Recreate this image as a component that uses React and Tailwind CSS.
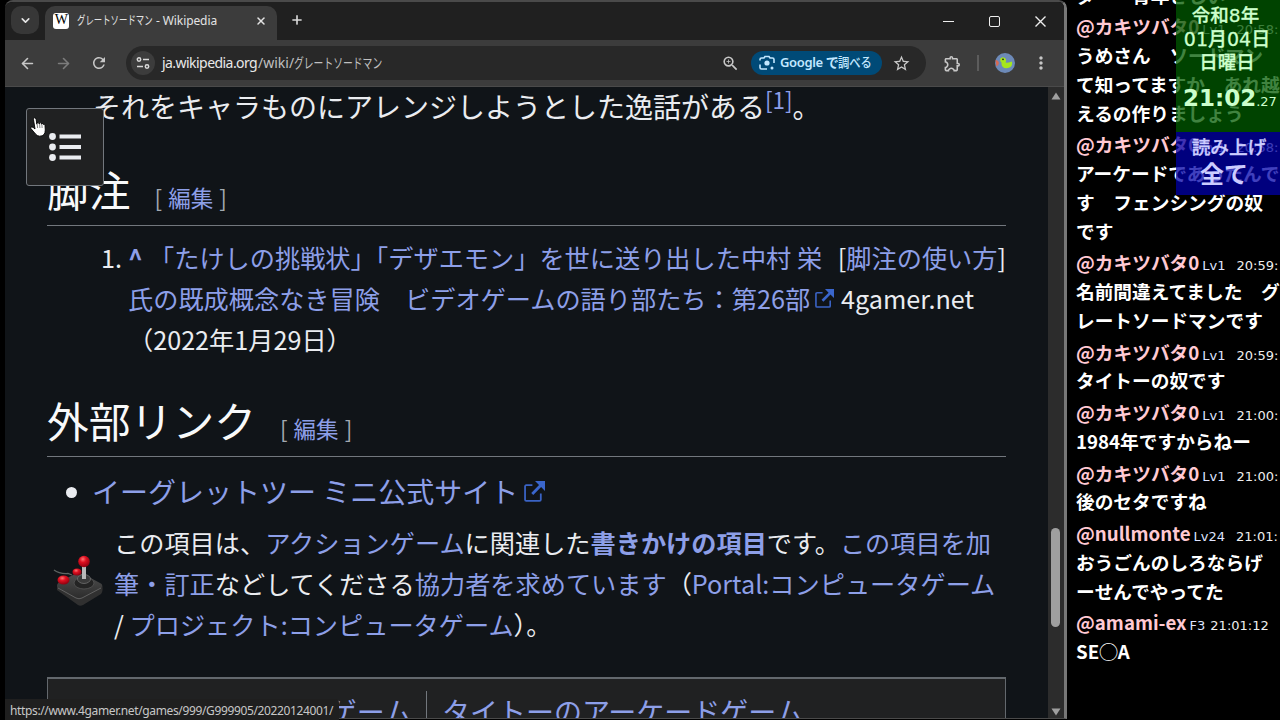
import { ChevronDown, Plus, X, ArrowLeft, ArrowRight } from 'lucide-react';
import { MdRefresh, MdOutlineExtension, MdStarBorder, MdZoomIn, MdMoreVert } from 'react-icons/md';

const messages = [
  { user: '@カキツバタ0', meta: 'Lv1', time: '20:58:', lines: ['うめさん　ソードマン', 'て知ってますか　あれ越', 'えるの作りましょう'] },
  { user: '@カキツバタ0', meta: 'Lv1', time: '20:58:', lines: ['アーケードであったんで', 'す　フェンシングの奴', 'です'] },
  { user: '@カキツバタ0', meta: 'Lv1', time: '20:59:', lines: ['名前間違えてました　グ', 'レートソードマンです'] },
  { user: '@カキツバタ0', meta: 'Lv1', time: '20:59:', lines: ['タイトーの奴です'] },
  { user: '@カキツバタ0', meta: 'Lv1', time: '21:00:', lines: ['1984年ですからねー'] },
  { user: '@カキツバタ0', meta: 'Lv1', time: '21:00:', lines: ['後のセタですね'] },
  { user: '@nullmonte', meta: 'Lv24', time: '21:01:', lines: ['おうごんのしろならげ', 'ーせんでやってた'] },
  { user: '@amami-ex', meta: 'F3', time: '21:01:12', lines: ['SE◯A'], tight: true },
];

function Link({ children, className = '' }) {
  return <a className={`text-[#8d9fe8] ${className}`}>{children}</a>;
}

function ExternalIcon({ className }) {
  return (
    <svg viewBox="0 0 20 20" className={`inline-block shrink-0 ${className}`}>
      <path d="M8 4H2.2Q1 4 1 5.200V17.800Q1 19 2.200 19H14.800Q16 19 16 17.800V12" fill="none" stroke="#3a63c4" strokeWidth="1.7" />
      <path d="M10.500 0H20V9.500L16.300 5.800L8.800 13.300L6.900 11.400L14.300 3.900Z" fill="#3a66cc" />
    </svg>
  );
}

function Joystick() {
  return (
    <svg viewBox="0 0 52 52" className="h-[52px] w-[52px] shrink-0">
      <defs>
        <linearGradient id="base" x1="0" y1="0" x2="0" y2="1">
          <stop offset="0" stopColor="#4e4e4e" />
          <stop offset="1" stopColor="#2c2c2c" />
        </linearGradient>
        <radialGradient id="ball" cx="0.4" cy="0.3" r="0.7">
          <stop offset="0" stopColor="#ff7474" />
          <stop offset="0.4" stopColor="#df1020" />
          <stop offset="1" stopColor="#8e0010" />
        </radialGradient>
      </defs>
      <path d="M1 15Q6 19 15 18.500L19 20" fill="none" stroke="#5d6563" strokeWidth="1.300" />
      <path d="M4 31V35L25 50Q27 51.500 30 50L48 39Q50 37 49.500 31Z" fill="#303030" />
      <path d="M4 31Q4 28 8 26L22 19Q26 18 30 19L47 28Q51 30 48 33L29 43Q26 44.500 23 43L5 33Z" fill="url(#base)" />
      <path d="M5 33L23 43Q26 44.500 29 43L48 33" fill="none" stroke="#666" strokeWidth="0.900" />
      <ellipse cx="31" cy="28" rx="10" ry="6" fill="#242424" stroke="#555" strokeWidth="0.800" />
      <ellipse cx="31" cy="24" rx="6.500" ry="4.500" fill="#3a3a3a" stroke="#777" strokeWidth="0.700" />
      <rect x="29" y="10" width="4" height="14" fill="#b9b9b9" />
      <ellipse cx="24" cy="17" rx="4.500" ry="3.500" fill="url(#ball)" />
      <circle cx="31" cy="6.500" r="5.800" fill="url(#ball)" />
      <ellipse cx="10.500" cy="25" rx="6" ry="4.500" fill="url(#ball)" />
    </svg>
  );
}

function HandCursor() {
  return (
    <svg viewBox="0 0 16 20" className="absolute left-[3px] top-[8px] h-5 w-4">
      <path
        d="M4.200 0.800Q5.800 0.500 6.100 2.300L6.900 7.200V5.600Q8.500 4.800 8.900 6.200L9.300 7V5.800Q10.900 5.200 11.300 6.500L11.600 7.300V6.500Q13 6 13.500 7.500Q14.600 6.900 15 8.500L15.300 13Q15.200 16 14 17.500Q12.500 19.300 9.500 19.200Q7 19 5.500 17L0.900 11.500Q0.400 10 1.800 9.900Q3 10 5 12L3.500 2.600Q3.300 1.200 4.200 0.800Z"
        fill="#fff"
        stroke="#000"
        strokeWidth="0.900"
      />
      <path d="M7.200 7.200L7.600 11M9.600 7L9.900 11M11.900 7.500L12.100 11" stroke="#333" strokeWidth="0.600" fill="none" />
    </svg>
  );
}

function TabStrip() {
  return (
    <div className="flex h-[39px] items-end bg-[#202020] pl-[6px]">
      <button className="mb-[6px] flex h-7 w-7 items-center justify-center rounded-[10px] bg-[#373737] text-[#e3e3e3]">
        <ChevronDown className="h-[13px] w-[13px]" strokeWidth={3} />
      </button>
      <div className="ml-[6px] flex h-[34px] w-[232px] items-center rounded-t-[10px] bg-[#3c3c3c] pb-[5px] pl-2">
        <span className="flex h-4 w-4 shrink-0 items-center justify-center rounded-[3px] bg-white pb-px font-['Liberation_Serif'] text-[14px] leading-none tracking-tighter text-black">
          W
        </span>
        <div className="ml-2 flex text-[12px] whitespace-pre text-[#e3e3e3]">
          <span className="inline-block w-[76px] origin-left">
            <span className="inline-block origin-left scale-x-[0.7]">グレートソードマン</span>
          </span>
          <span className="w-[66px] tracking-[-0.1px]"> - Wikipedia</span>
        </div>
        <X className="ml-[36px] h-3 w-3 text-[#e3e3e3]" strokeWidth={3} />
      </div>
      <Plus className="mb-[13px] ml-[13px] h-[14px] w-[14px] text-[#d8d8d8]" strokeWidth={2.8} />
      <div className="mr-[18px] mb-[13px] ml-auto flex items-center gap-[35px]">
        <span className="h-[1.500px] w-[11px] bg-[#eee]" />
        <span className="h-[11px] w-[11px] rounded-[2px] border-[1.500px] border-[#eee]" />
        <svg viewBox="0 0 11 11" className="h-[11px] w-[11px]">
          <path d="M0.500 0.500L10.500 10.500M10.500 0.500L0.500 10.500" stroke="#eee" strokeWidth="1.400" />
        </svg>
      </div>
    </div>
  );
}

function Toolbar() {
  return (
    <div className="flex h-[47px] items-center border-b border-[#4a4a4a] bg-[#3c3c3c] pl-[14px] text-[#c7c7c7]">
      <ArrowLeft className="h-[17px] w-[17px]" strokeWidth={2.3} />
      <ArrowRight className="ml-[19px] h-[17px] w-[17px] text-[#7c7c7c]" strokeWidth={2.3} />
      <MdRefresh className="ml-[18px] h-[18px] w-[18px]" />
      <div className="ml-[18px] flex h-[34px] w-[800px] shrink-0 items-center rounded-full bg-[#282828] pl-[5px]">
        <span className="flex h-6 w-6 items-center justify-center rounded-full bg-[#3c3c3c]">
          <svg viewBox="0 0 14 12" className="h-3 w-[14px]" fill="none" stroke="#d8d8d8" strokeWidth="1.500">
            <circle cx="3" cy="2.500" r="1.700" />
            <path d="M7 2.500H13M1 9.500H7" />
            <circle cx="11" cy="9.500" r="1.700" />
          </svg>
        </span>
        <div className="ml-[7px] flex pb-[2px] text-[14px] whitespace-pre">
          <span className="w-[96px] tracking-[-0.550px] text-[#e8e8e8]">ja.wikipedia.org</span>
          <span className="w-[36px] text-[#c0c0c0]">/wiki/</span>
          <span className="w-[90px]">
            <span className="inline-block origin-left scale-x-[0.700] text-[#c0c0c0]">グレートソードマン</span>
          </span>
        </div>
        <MdZoomIn className="ml-auto h-[19px] w-[19px]" />
        <div className="ml-[11px] flex h-6 w-[131px] items-center rounded-full bg-[#004a77] pl-[8px] text-[#c2e7ff]">
          <svg viewBox="0 0 16 16" className="h-4 w-4" fill="none" stroke="#c2e7ff" strokeWidth="1.600">
            <path d="M1 5.500V4.500Q1 3 2.500 3H5L6 1.500H10L11 3H13.500Q15 3 15 4.500V8M1 9.500V12.500Q1 14 2.500 14H8" />
            <circle cx="8" cy="8" r="2.600" fill="#c2e7ff" stroke="none" />
            <circle cx="13" cy="13" r="1.500" fill="#c2e7ff" stroke="none" />
          </svg>
          <span className="ml-[5px] text-[13px] font-semibold tracking-[-0.350px] whitespace-nowrap">Google で</span>
          <span className="inline-block origin-left scale-x-[0.870] text-[13px] font-medium whitespace-nowrap">調べる</span>
        </div>
        <MdStarBorder className="mr-[15px] ml-[10px] h-[19px] w-[19px] shrink-0" />
      </div>
      <MdOutlineExtension className="ml-[17px] h-[19px] w-[19px]" />
      <span className="ml-[15px] h-4 w-[2px] bg-[#5c5c5c]" />
      <svg viewBox="0 0 20 20" className="ml-[16px] h-5 w-5">
        <circle cx="10" cy="10" r="10" fill="#6d8ab8" />
        <path d="M5 6Q7 3 10 5Q12 7 10.500 9.500Q14 10 17 8.500Q18 14 13 15Q7 16 6.500 11Q7 9 5.500 8.500Z" fill="#a6e61e" />
        <path d="M0.500 7Q3 7 4 10Q3.500 12 1.500 13.500Z" fill="#d86a54" />
        <circle cx="8" cy="6.300" r="0.900" fill="#222" />
      </svg>
      <MdMoreVert className="ml-[16px] h-5 w-5" />
    </div>
  );
}

function SectionHeading({ title, className = '' }) {
  return (
    <div className={`flex h-[61px] items-baseline border-b border-[#72777d] leading-[48px] whitespace-nowrap ${className}`}>
      <h2 className="text-[41.800px] text-[#f8f9fa]">{title}</h2>
      <span className="ml-[24px] flex text-[22.500px] text-[#a2a9b1]">
        [<Link className="mx-[6px]">編集</Link>]
      </span>
    </div>
  );
}

function Article() {
  return (
    <main className="h-[632px] flex-1 overflow-hidden bg-[#101418] px-[42px] font-['Noto_Sans_CJK_JP',sans-serif] text-[25.200px] leading-[41px] whitespace-nowrap text-[#eaecf0]">
      <p className="-mt-px h-10 pl-[46px] text-[28px]">
        それをキャラものにアレンジしようとした逸話がある
        <Link className="relative -top-[9px] text-[22.400px]">[1]</Link>。
      </p>

      <SectionHeading title="脚注" className="mt-[39px]" />
      <div className="mt-[11px] flex">
        <div className="w-[81px] pl-[54px]">1.</div>
        <div className="flex-1">
          <div className="flex">
            <Link className="w-[21px] font-bold">^</Link>
            <Link>「たけしの挑戦状」「デザエモン」を世に送り出した中村 栄</Link>
            <span className="ml-auto">[<Link>脚注の使い方</Link>]</span>
          </div>
          <div className="flex items-center">
            <Link>氏の既成概念なき冒険　ビデオゲームの語り部たち：第26部</Link>
            <ExternalIcon className="mr-[7px] ml-[5px] h-[19px] w-[19px]" />
            4gamer.net
          </div>
          <div>（2022年1月29日）</div>
        </div>
      </div>

      <SectionHeading title="外部リンク" className="mt-[36px]" />
      <div className="mt-[14px] flex items-center text-[28px]">
        <span className="mt-[2px] ml-[19px] h-[11px] w-[11px] rounded-full bg-[#eaecf0]" />
        <Link className="ml-[15px]">イーグレットツー ミニ公式サイト</Link>
        <ExternalIcon className="ml-[6px] h-[21px] w-[21px]" />
      </div>

      <div className="mt-[10px] flex">
        <div className="w-[67px] pt-[33px] pl-[6px]">
          <Joystick />
        </div>
        <div>
          <div>
            この項目は、<Link>アクションゲーム</Link>に関連した<Link className="font-bold">書きかけの項目</Link>です。<Link>この項目を加</Link>
          </div>
          <div>
            <Link>筆・訂正</Link>などしてくださる<Link>協力者を求めています</Link>（<Link>Portal:コンピュータゲーム</Link>
          </div>
          <div>
            / <Link>プロジェクト:コンピュータゲーム</Link>）。
          </div>
        </div>
      </div>

      <div className="mt-[32px] flex h-[60px] border border-t-2 border-b-0 border-[#63686d] bg-[#202122] pt-[12px] text-[28px]">
        <div className="w-[379px] border-r border-[#72777d] pr-[14px] text-right">
          <Link>ゲーム</Link>
        </div>
        <Link className="ml-[15px]">タイトーのアーケードゲーム</Link>
      </div>
    </main>
  );
}

function Scrollbar() {
  return (
    <div className="flex h-[632px] w-[16px] flex-col items-center bg-[#2c2c2c] pr-px">
      <svg viewBox="0 0 10 8" className="mt-[5px] h-2 w-[10px]">
        <path d="M5 0.500L9.500 7.500H0.500Z" fill="#9f9f9f" />
      </svg>
      <div className="mt-[428px] h-[99px] w-[9px] rounded-full bg-[#9f9f9f]" />
      <svg viewBox="0 0 10 8" className="mt-auto mb-[3px] h-2 w-[10px]">
        <path d="M5 7.500L9.500 0.500H0.500Z" fill="#9f9f9f" />
      </svg>
    </div>
  );
}

function Browser() {
  return (
    <div className="relative h-[720px] w-[1067px] shrink-0 overflow-hidden rounded-tr-lg bg-black pl-[5px]">
      <div className="h-[719px] w-[1062px] overflow-hidden rounded-t-lg border-t-2 border-r-[3px] border-b border-[#4a4a4a] border-r-[#777]">
        <div className="-mt-px">
          <TabStrip />
          <Toolbar />
          <div className="flex">
            <Article />
            <Scrollbar />
          </div>
        </div>
      </div>

      {/* Table of contents button with the pointer over it */}
      <div className="absolute top-[108px] left-[26px] flex h-[78px] w-[78px] items-center justify-center rounded-[3px] border border-[#72777d] bg-[#202122]">
        <HandCursor />
        <svg viewBox="0 0 32 30" className="h-[30px] w-8" fill="#eaecf0">
          <circle cx="3.500" cy="4.500" r="3.400" />
          <circle cx="3.500" cy="15" r="3.400" />
          <circle cx="3.500" cy="25.500" r="3.400" />
          <path d="M10.500 2.500H32V6.500H10.500ZM10.500 13H32V17H10.500ZM10.500 23.500H32V27.500H10.500Z" />
        </svg>
      </div>

      {/* Link target bubble */}
      <div className="absolute bottom-0 left-[5px] h-[21px] w-[334px] rounded-tr bg-[#1f1f1f] pl-[5px] text-[12px] leading-[23px] tracking-[-0.360px] whitespace-nowrap text-[#c7c7c7]">
        https://www.4gamer.net/games/999/G999905/20220124001/
      </div>
    </div>
  );
}

function Chat() {
  return (
    <aside className="relative h-[720px] flex-1 overflow-hidden bg-black pl-[9px] font-['Noto_Sans_CJK_JP',sans-serif] text-[18.700px] leading-[28.750px] font-bold whitespace-nowrap text-white">
      <div className="-mt-[19.500px]">ダー　青年さしい</div>
      {messages.map((m, i) => (
        <div key={i} className="mt-[3px]">
          <div className="flex h-[28.750px] items-baseline">
            <span className="text-[#ffc9d3]">{m.user}</span>
            <span className="ml-[3px] font-['DejaVu_Sans'] text-[13px] font-normal text-[#dfe4ff]">{m.meta}</span>
            <span className={`font-['DejaVu_Sans'] text-[13px] font-normal text-[#eee] ${m.tight ? 'ml-[5px]' : 'ml-[11px]'}`}>{m.time}</span>
          </div>
          {m.lines.map((line) => (
            <div key={line}>{line}</div>
          ))}
        </div>
      ))}

      {/* Clock and read-aloud status */}
      <div className="absolute top-0 right-0 w-[104px] text-center font-['DejaVu_Sans','Noto_Sans_CJK_JP',sans-serif] font-medium">
        <div className="h-[132px] bg-[#005a00]/75 pt-1 text-[18.500px] leading-[24px] text-[#ccffcc] [-webkit-text-stroke:0.3px]">
          <div className="pr-[5px]">令和8年</div>
          <div className="-mt-px mb-px pr-[2px] text-[19px]">01月04日</div>
          <div className="-mt-px mb-px pr-[2px]">日曜日</div>
          <div className="mt-[11px] flex items-baseline pl-[7px] [-webkit-text-stroke:0px]">
            <span className="text-[23px] font-bold">21:02</span>
            <span className="text-[13px]">.27</span>
          </div>
        </div>
        <div className="h-[63px] bg-[#0000a8]/75 text-[#ccccff]">
          <div className="pt-[3px] pl-[2px] text-[18.700px] leading-[26px] [-webkit-text-stroke:0.3px]">読み上げ</div>
          <div className="pr-[8px] text-[24px] leading-[28px] font-bold">全て</div>
        </div>
      </div>
    </aside>
  );
}

export default function App() {
  return (
    <div className="flex h-[720px] w-[1280px] overflow-hidden bg-black font-['Noto_Sans','Noto_Sans_CJK_JP',sans-serif]">
      <Browser />
      <Chat />
    </div>
  );
}
